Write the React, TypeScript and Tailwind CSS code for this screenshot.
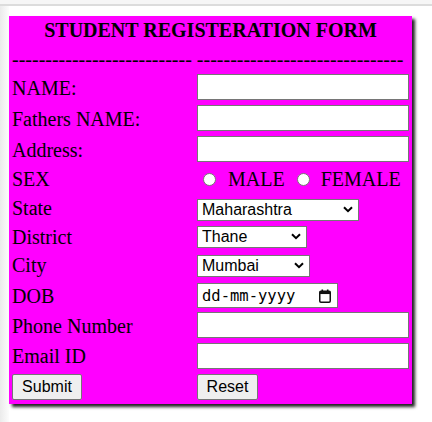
import React from "react";

const serif = { fontFamily: '"Liberation Serif", "Times New Roman", serif' };
const sans = { fontFamily: '"Liberation Sans", Arial, sans-serif' };

function Chevron() {
  return (
    <svg
      className="pointer-events-none absolute right-[6px] top-[7px] block"
      width="10"
      height="7"
      viewBox="0 0 10 7"
    >
      <path d="M1 1.2 L5 5.2 L9 1.2" fill="none" stroke="#000" strokeWidth="2" />
    </svg>
  );
}

function Select({ width, value }: { width: string; value: string }) {
  return (
    <div className={`relative block h-[22px] leading-none ${width}`}>
      <select
        defaultValue={value}
        className="block h-[22px] w-full appearance-none rounded-none border border-[#767676] bg-white pl-[4px] text-[16px] leading-[20px] text-black outline-none"
        style={sans}
      >
        <option>{value}</option>
      </select>
      <Chevron />
    </div>
  );
}

function TextInput() {
  return (
    <input
      type="text"
      className="mt-[2px] block h-[26px] w-[212px] border border-[#767676] bg-white outline-none"
    />
  );
}

function Row({
  h,
  label,
  lpt,
  children,
}: {
  h: string;
  label: string;
  lpt: string;
  children: React.ReactNode;
}) {
  return (
    <div className={`flex ${h}`}>
      <div className={`w-[185px] leading-[23px] ${lpt}`}>{label}</div>
      <div className="flex w-[212px] flex-col items-start">{children}</div>
    </div>
  );
}

function Radio() {
  return (
    <span className="inline-block h-[13px] w-[13px] rounded-full border border-[#767676] bg-white" />
  );
}

export default function App() {
  return (
    <div className="flex h-[422px] w-[432px] flex-col overflow-hidden bg-white">
      <div className="h-[4px] bg-[#f6f6f6]" />
      <div className="h-[2px] bg-[#dcdcdc]" />
      <div className="flex flex-1">
        <div className="w-[9px] bg-linear-to-r from-[#ebebeb] to-[#fcfcfc]" />
        <div>
          <div
            className="mt-[10px] h-[388px] w-[403px] bg-[#ff00ff] px-[3px] text-[20px] text-black shadow-[3px_3px_3px_#222]"
            style={serif}
          >
            <div className="h-[28px] pt-[3px] text-center text-[20px] font-bold leading-[23px]">
              STUDENT REGISTERATION FORM
            </div>
            <div className="h-[28px] whitespace-pre pt-[4px] leading-[23px]">
              {"---------------------------" + " " + "-------------------------------"}
            </div>

            <Row h="h-[31px]" label="NAME:" lpt="pt-[5px]">
              <TextInput />
            </Row>
            <Row h="h-[31px]" label="Fathers NAME:" lpt="pt-[5px]">
              <TextInput />
            </Row>
            <Row h="h-[31px]" label="Address:" lpt="pt-[5px]">
              <TextInput />
            </Row>
            <Row h="h-[31px]" label="SEX" lpt="pt-[3px]">
              <div className="flex items-center pt-[3px] leading-[23px]">
                <span className="ml-[6px] flex">
                  <Radio />
                </span>
                <span className="ml-[12px]">MALE</span>
                <span className="ml-[12px] flex">
                  <Radio />
                </span>
                <span className="ml-[11px]">FEMALE</span>
              </div>
            </Row>
            <Row h="h-[28px]" label="State" lpt="pt-[1px]">
              <div className="mt-[3px]">
                <Select width="w-[162px]" value="Maharashtra" />
              </div>
            </Row>
            <Row h="h-[29px]" label="District" lpt="pt-[2px]">
              <div className="mt-[2px]">
                <Select width="w-[110px]" value="Thane" />
              </div>
            </Row>
            <Row h="h-[28px]" label="City" lpt="pt-[1px]">
              <div className="mt-[2px]">
                <Select width="w-[113px]" value="Mumbai" />
              </div>
            </Row>
            <Row h="h-[29px]" label="DOB" lpt="pt-[4px]">
              <div className="mt-[2px] flex h-[25px] w-[141px] items-center justify-between border border-[#767676] bg-white pl-[4px] pr-[6px]">
                <span
                  className="text-[15.5px] leading-[20px] text-black"
                  style={{ fontFamily: '"DejaVu Sans Mono", monospace' }}
                >
                  dd-mm-yyyy
                </span>
                <svg width="12" height="14" viewBox="0 0 12 14" className="block">
                  <rect x="0.75" y="2.25" width="10.5" height="11" rx="1.2" fill="none" stroke="#111" strokeWidth="1.5" />
                  <rect x="0.75" y="2.25" width="10.5" height="2.8" fill="#111" />
                  <rect x="2.5" y="0.5" width="1.6" height="2.5" fill="#111" />
                  <rect x="7.9" y="0.5" width="1.6" height="2.5" fill="#111" />
                </svg>
              </div>
            </Row>
            <Row h="h-[31px]" label="Phone Number" lpt="pt-[5px]">
              <TextInput />
            </Row>
            <Row h="h-[31px]" label="Email ID" lpt="pt-[4px]">
              <TextInput />
            </Row>
            <div className="flex h-[32px]">
              <div className="w-[185px]">
                <button
                  className="mt-[2px] block h-[26px] w-[70px] rounded-[2px] border border-[#767676] bg-[#efefef] text-[16px] leading-[20px] text-black"
                  style={sans}
                >
                  Submit
                </button>
              </div>
              <div className="w-[212px]">
                <button
                  className="mt-[2px] block h-[26px] w-[61px] rounded-[2px] border border-[#767676] bg-[#efefef] text-[16px] leading-[20px] text-black"
                  style={sans}
                >
                  Reset
                </button>
              </div>
            </div>
          </div>
        </div>
      </div>
    </div>
  );
}
